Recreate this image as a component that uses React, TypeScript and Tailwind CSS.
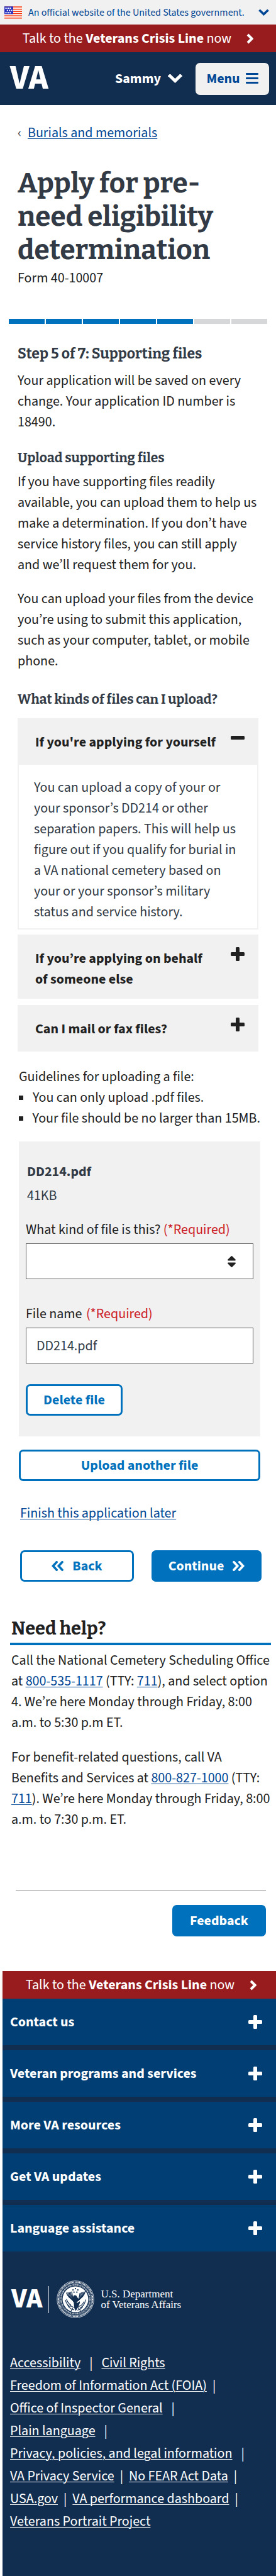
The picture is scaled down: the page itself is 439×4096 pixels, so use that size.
import type { ReactNode } from "react";

const sans = "font-['Source_Sans_3','Noto_Sans_CJK_SC',sans-serif]";
const slab = "font-['Bitter','DejaVu_Serif',serif]";

function FlagIcon() {
  const stars = [
    [7, 8], [22, 8], [37, 8],
    [17, 24], [32, 24], [47, 24],
    [7, 40], [22, 40], [37, 40],
  ];
  return (
    <svg viewBox="0 0 125 87" className="h-5 w-7 shrink-0" aria-hidden="true">
      <rect width="125" height="87" fill="#fff" />
      {[0, 16, 32, 47, 63, 79].map((y) => (
        <rect key={y} y={y} width="125" height="7" fill="#f5330c" />
      ))}
      <rect width="62" height="54" fill="#2630bd" />
      {stars.map(([x, y]) => (
        <rect key={`${x}-${y}`} x={x} y={y} width="9" height="9" fill="#fff" />
      ))}
    </svg>
  );
}

function ChevronDown({ className }: { className: string }) {
  return (
    <svg viewBox="0 0 23 14" className={className} aria-hidden="true">
      <path d="M2.6 2 11.5 10.6 20.4 2" fill="none" stroke="currentColor" strokeWidth="5" />
      <path d="M1 3 3.4.7M22 3 19.6.7" stroke="currentColor" strokeWidth="2" strokeLinecap="round" />
    </svg>
  );
}

function ChevronRight() {
  return (
    <svg viewBox="0 0 11 17" className="h-[17px] w-[11px] shrink-0" aria-hidden="true">
      <path d="M2 2 8.6 8.5 2 15" fill="none" stroke="currentColor" strokeWidth="4" />
    </svg>
  );
}

function DoubleAngle({ flip }: { flip?: boolean }) {
  return (
    <svg viewBox="0 0 84 72" className={flip ? "h-4 w-[19px] -scale-x-100" : "h-4 w-[19px]"} aria-hidden="true">
      <path d="M8 8 34 36 8 64M48 8 74 36 48 64" fill="none" stroke="currentColor" strokeWidth="16" strokeLinecap="round" />
    </svg>
  );
}

function PlusIcon({ minus }: { minus?: boolean }) {
  return (
    <svg viewBox="0 0 22 22" className="size-[22px] shrink-0" aria-hidden="true" fill="currentColor">
      <rect y="8" width="22" height="6" rx="1.5" />
      {!minus && <rect x="8" width="6" height="22" rx="1.5" />}
    </svg>
  );
}

function Seal() {
  const spokes = Array.from({ length: 5 }, (_, i) => i);
  return (
    <svg viewBox="0 0 264 264" className="size-[60px] shrink-0" role="img" aria-label="Seal">
      <g fill="none" stroke="#fff">
        <circle cx="132" cy="132" r="129" strokeWidth="3" />
        <circle cx="132" cy="132" r="120" strokeWidth="9" strokeDasharray="6 4" />
        <circle cx="132" cy="132" r="113" strokeWidth="2" />
        <circle cx="132" cy="132" r="101" strokeWidth="11" strokeOpacity=".75" strokeDasharray="4 3 7 3 3 4 6 3" />
      </g>
      <circle cx="132" cy="132" r="90" fill="#fff" />
      <g fill="#112e51">
        <circle cx="132" cy="58" r="5" />
        <circle cx="115" cy="67" r="5" />
        <circle cx="149" cy="67" r="5" />
        <circle cx="122" cy="82" r="5" />
        <circle cx="142" cy="82" r="5" />
        <path d="M118 108c8-8 22-4 24 6l14 18 8 22-10 26-20 34-10-20-4-40-12-20z" />
      </g>
      <g fill="none" stroke="#112e51" strokeLinecap="round">
        {spokes.map((i) => (
          <path
            key={i}
            d={`M${70 + i * 9} ${88 - i * 2}Q${80 + i * 8} ${118 + i * 3} ${118 + i * 2} ${140 + i * 4}M${200 - i * 9} ${78 + i * 3}Q${192 - i * 8} ${116 + i * 2} ${150 - i} ${136 + i * 5}`}
            strokeWidth="6"
          />
        ))}
        <path d="M62 138q8 34 34 46M70 132q6 24 28 38M78 176q16 26 44 30M92 168q12 18 28 20M202 136q-4 40-38 58M190 150q-8 24-34 32M148 208q22-6 34-22M112 196l-10 18M150 190l16 20" strokeWidth="5" />
      </g>
      <path d="m60 104 58 62M204 112l-62 44" stroke="#fff" strokeWidth="7" />
    </svg>
  );
}

function CrisisBar({ className }: { className: string }) {
  return (
    <a href="#crisis-line" className={`flex h-11 items-center justify-center gap-6 bg-[#981b1e] text-[22px] whitespace-nowrap text-white ${className}`}>
      <span>
        Talk to the <b>Veterans Crisis Line</b> now
      </span>
      <ChevronRight />
    </a>
  );
}

function AccordionButton({ children, open }: { children: ReactNode; open?: boolean }) {
  return (
    <button type="button" aria-expanded={!!open} className="flex min-h-[74px] w-full items-start justify-between bg-[#f1f1f1] pt-5 pr-[22px] pb-3.5 pl-7 text-left font-bold">
      <span className="pt-0.5 pr-4">{children}</span>
      <PlusIcon minus={open} />
    </button>
  );
}

function InlineLink({ children }: { children: ReactNode }) {
  return (
    <a href="#link" className="text-[#004795] underline decoration-1 underline-offset-2">
      {children}
    </a>
  );
}

const footerSections = ["Contact us", "Veteran programs and services", "More VA resources", "Get VA updates", "Language assistance"];

type FooterRow = { links: string[]; wide?: boolean; trailing?: boolean };
const footerRows: FooterRow[] = [
  { links: ["Accessibility", "Civil Rights"], wide: true },
  { links: ["Freedom of Information Act (FOIA)"], trailing: true },
  { links: ["Office of Inspector General"], wide: true, trailing: true },
  { links: ["Plain language"], wide: true, trailing: true },
  { links: ["Privacy, policies, and legal information"], wide: true, trailing: true },
  { links: ["VA Privacy Service", "No FEAR Act Data"], trailing: true },
  { links: ["USA.gov", "VA performance dashboard"], trailing: true },
  { links: ["Veterans Portrait Project"] },
];

const outlineButton = "h-[50px] rounded-[7px] border-[3px] border-[#0071bc] bg-white font-bold text-[#0071bc]";

export default function App() {
  return (
    <div className={`w-full bg-white text-[22px] leading-[33px] text-[#212121] ${sans}`}>
      <header>
        <button type="button" className="flex h-[39px] w-full items-center bg-[#f1f1f1] pr-[11px] pl-[7px] text-base whitespace-nowrap text-[#004795]">
          <FlagIcon />
          <span className="ml-2.5">An official website of the United States government.</span>
          <ChevronDown className="ml-auto h-2.5 w-[17px] shrink-0" />
        </button>
        <CrisisBar className="" />
        <div className="flex h-21 items-center bg-[#112e51] pr-[11px] pl-4 text-white">
          <a href="#home" className="text-[54px] leading-[54px] font-extrabold">VA</a>
          <button type="button" className="ml-auto flex items-center gap-[11px] font-bold">
            Sammy
            <ChevronDown className="h-3.5 w-[23px]" />
          </button>
          <button type="button" className="ml-[21px] flex h-[51px] w-[117px] items-center justify-center gap-[9px] rounded-[7px] bg-[#f1f1f1] font-bold text-[#004795]">
            Menu
            <svg viewBox="0 0 20 18" className="h-[18px] w-5" fill="currentColor" aria-hidden="true">
              <rect width="20" height="3" rx="1" />
              <rect y="7" width="20" height="3" rx="1" />
              <rect y="14" width="20" height="3" rx="1" />
            </svg>
          </button>
        </div>
      </header>

      <main>
        <nav className="flex gap-2.5 px-7 pt-7 leading-8" aria-label="Breadcrumb">
          <span className="text-[#323a45]">‹</span>
          <InlineLink>Burials and memorials</InlineLink>
        </nav>

        <div className="px-7">
          <h1 className={`mt-[38px] text-[44px] leading-[53px] font-bold text-[#323a45] ${slab}`}>Apply for pre-need eligibility determination</h1>
          <p className="mt-0.5">Form 40-10007</p>
        </div>

        <div className="mt-12 grid grid-cols-7 gap-0.5 px-3.5" role="progressbar" aria-valuenow={5} aria-valuemin={0} aria-valuemax={7} aria-label="Form progress">
          {[1, 2, 3, 4, 5, 6, 7].map((n) => (
            <span key={n} className={n <= 5 ? "h-2 bg-[#0071bc]" : "h-2 bg-[#d6d7d9]"} />
          ))}
        </div>

        <div className="px-7">
          <h2 className={`mt-8 text-[23px] leading-[30px] font-bold text-[#323a45] ${slab}`}>Step 5 of 7: Supporting files</h2>
          <p className="mt-3">Your application will be saved on every change. Your application ID number is 18490.</p>
          <h3 className={`mt-[26px] text-[21px] leading-7 font-bold text-[#323a45] ${slab}`}>Upload supporting files</h3>
          <p className="mt-2">If you have supporting files readily available, you can upload them to help us make a determination. If you don’t have service history files, you can still apply and we’ll request them for you.</p>
          <p className="mt-[21px]">You can upload your files from the device you’re using to submit this application, such as your computer, tablet, or mobile phone.</p>
          <h3 className={`mt-[30px] text-[21px] leading-7 font-bold text-[#323a45] ${slab}`}>What kinds of files can I upload?</h3>

          <div className="mt-4">
            <AccordionButton open>If you're applying for yourself</AccordionButton>
            <div className="border-2 border-t-0 border-[#f1f1f1] pt-5 pr-7 pb-[9px] pl-6 text-[#323a45]">
              You can upload a copy of your or your sponsor’s DD214 or other separation papers. This will help us figure out if you qualify for burial in a VA national cemetery based on your or your sponsor’s military status and service history.
            </div>
          </div>
          <div className="mt-2">
            <AccordionButton>
              If you’re applying on behalf
              <br />
              of someone else
            </AccordionButton>
          </div>
          <div className="mt-2.5">
            <AccordionButton>Can I mail or fax files?</AccordionButton>
          </div>
        </div>

        <form className="pr-[25px] pl-[30px]" onSubmit={(e) => e.preventDefault()}>
          <p className="mt-6">Guidelines for uploading a file:</p>
          <ul className="whitespace-nowrap">
            {["You can only upload .pdf files.", "Your file should be no larger than 15MB."].map((t) => (
              <li key={t} className="flex items-center gap-[15px]">
                <span className="size-[7px] bg-[#212121]" />
                {t}
              </li>
            ))}
          </ul>

          <section className="mt-5 bg-[#f1f1f1] px-[11px] pt-8 pb-[33px]">
            <p className="px-0.5 font-bold text-[#323a45]">DD214.pdf</p>
            <p className="mt-[5px] px-0.5 text-[#323a45]">41KB</p>
            <label htmlFor="kind" className="mt-[21px] block">
              What kind of file is this? <span className="text-[#cd2026]">(*Required)</span>
            </label>
            <div className="relative mt-[5px]">
              <select id="kind" className="block h-[57px] w-full appearance-none border border-[#5b5b5b] bg-white px-4">
                <option value=""></option>
              </select>
              <svg viewBox="0 0 56 78" className="pointer-events-none absolute top-5 right-7 h-[18px] w-[13px]" fill="#212121" aria-hidden="true">
                <path d="M24 2q4-3 8 0l22 22q4 7-2 8H4q-6-1-2-8zM24 76q4 3 8 0l22-22q4-7-2-8H4q-6 1-2 8z" />
              </svg>
            </div>
            <label htmlFor="file-name" className="mt-[39px] block">
              File name <span className="ml-0.5 text-[#cd2026]">(*Required)</span>
            </label>
            <input id="file-name" defaultValue="DD214.pdf" className="mt-[5px] block h-[57px] w-full border border-[#5b5b5b] bg-white px-4 text-[#323a45]" />
            <button type="button" className={`mt-[33px] block w-[154px] ${outlineButton}`}>Delete file</button>
          </section>

          <button type="button" className={`mt-[21px] block w-full ${outlineButton}`}>Upload another file</button>
        </form>

        <div className="pr-[23px] pl-8">
          <p className="mt-[35px]">
            <InlineLink>Finish this application later</InlineLink>
          </p>
          <div className="mt-[42px] flex gap-7">
            <button type="button" className={`flex flex-1 items-center justify-center gap-3.5 ${outlineButton}`}>
              <DoubleAngle flip />
              Back
            </button>
            <button type="button" className="flex h-[50px] flex-1 items-center justify-center gap-3.5 rounded-[7px] bg-[#0071bc] font-bold text-white">
              Continue
              <DoubleAngle />
            </button>
          </div>
        </div>

        <section className="mt-[57px] pr-2 pl-4">
          <h2 className={`border-b-4 border-[#0071bc] px-0.5 pb-1 text-[29px] leading-9 font-bold ${slab}`}>Need help?</h2>
          <div className="pl-0.5">
            <p className="mt-2">
              Call the National Cemetery Scheduling Office at <InlineLink>800-535-1117</InlineLink> (TTY: <InlineLink>711</InlineLink>), and select option 4. We’re here Monday through Friday, 8:00 a.m. to 5:30 p.m ET.
            </p>
            <p className="mt-[22px]">
              For benefit-related questions, call VA Benefits and Services at <InlineLink>800-827-1000</InlineLink> (TTY: <InlineLink>711</InlineLink>). We’re here Monday through Friday, 8:00 a.m. to 7:30 p.m. ET.
            </p>
          </div>
        </section>

        <div className="mt-24 pr-4 pl-[25px]">
          <hr className="border-[#919191]" />
          <button type="button" className="mt-[22px] ml-auto block h-[50px] w-[149px] rounded-[7px] bg-[#0071bc] font-bold text-white">Feedback</button>
        </div>
      </main>

      <footer className="mt-[55px] ml-1 bg-[#112e51] text-white">
        <CrisisBar className="pl-1.5 shadow-md" />
        <div className="flex flex-col gap-2">
          {footerSections.map((title) => (
            <button type="button" key={title} className="flex h-[74px] items-center justify-between bg-[#003e73] pr-[22px] pl-3 text-left font-bold">
              {title}
              <PlusIcon />
            </button>
          ))}
        </div>
        <div className="flex items-center pt-[46px] pl-3.5">
          <span className="text-[44px] leading-[44px] font-extrabold">VA</span>
          <span className="ml-2.5 h-[43px] w-px bg-white/80" />
          <span className="ml-3 flex">
            <Seal />
          </span>
          <p className="ml-2.5 font-['Liberation_Serif',serif] text-[17px] leading-[17px]">
            U.S. Department
            <br />
            of Veterans Affairs
          </p>
        </div>
        <ul className="mt-[53px] pb-[69px] pl-3 leading-9 whitespace-nowrap">
          {footerRows.map((row) => (
            <li key={row.links[0]} className={row.wide ? "flex gap-3.5" : "flex gap-[9px]"}>
              {row.links.map((link, i) => (
                <span key={link} className="contents">
                  {i > 0 && <span>|</span>}
                  <a href="#footer" className="underline decoration-1 underline-offset-2">{link}</a>
                </span>
              ))}
              {row.trailing && <span>|</span>}
            </li>
          ))}
        </ul>
      </footer>
    </div>
  );
}
